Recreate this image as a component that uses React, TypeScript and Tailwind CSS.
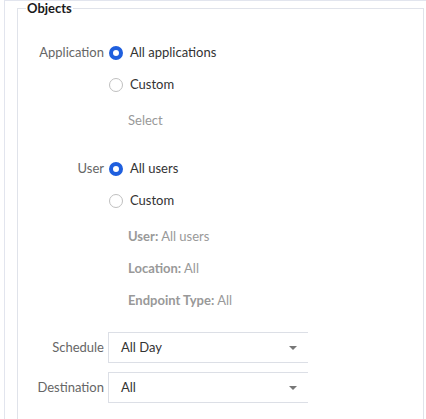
import React from "react";

const font = { fontFamily: "Lato, 'Noto Sans', sans-serif" };

function Radio({ checked }: { checked: boolean }) {
  return checked ? (
    <span className="box-border inline-block h-[14px] w-[14px] shrink-0 rounded-full border-[4px] border-[#1f5fde] bg-white" />
  ) : (
    <span className="box-border inline-block h-[14px] w-[14px] shrink-0 rounded-full border border-[#bfbfbf] bg-white" />
  );
}

function Label({ children }: { children?: React.ReactNode }) {
  return <div className="w-[86px] shrink-0 text-right text-[13px] text-[#666]">{children}</div>;
}

function RadioRow({ label, text, checked }: { label?: string; text: string; checked: boolean }) {
  return (
    <div className="flex h-[32px] items-center">
      <Label>{label}</Label>
      <div className="ml-[5px] flex items-center">
        <Radio checked={checked} />
        <span className="ml-[7px] text-[13px] text-[#333]">{text}</span>
      </div>
    </div>
  );
}

function HintRow({ children, className = "" }: { children: React.ReactNode; className?: string }) {
  return (
    <div className={`flex h-[32px] items-center ${className}`}>
      <div className="w-[110px] shrink-0" />
      <div className="text-[13px] text-[#999]">{children}</div>
    </div>
  );
}

function SelectRow({ label, value, className = "" }: { label: string; value: string; className?: string }) {
  return (
    <div className={`flex h-[31px] items-center ${className}`}>
      <Label>{label}</Label>
      <div className="ml-[4px] flex h-[31px] w-[200px] items-center border-y border-l border-[#dcdfe6] pl-[12px] pr-[11px]">
        <span className="flex-1 pt-[1px] text-[13px] text-[#333]">{value}</span>
        <span className="h-0 w-0 border-x-[4px] border-t-[4px] border-x-transparent border-t-[#777]" />
      </div>
    </div>
  );
}

export default function App() {
  return (
    <div className="h-[419px] w-[426px] overflow-hidden bg-white" style={font}>
      <div className="ml-[4px] h-[430px] border-l border-t border-[#e2e5ee] pl-[12px]">
        <fieldset className="h-[440px] w-[407px] border border-[#e0e3ea] pb-4">
          <legend className="ml-[8px] px-[1px] text-[13px] font-bold leading-[14px] text-[#1a1a1a]">Objects</legend>
          <div className="pt-[22px]">
            <RadioRow label="Application" text="All applications" checked />
            <RadioRow text="Custom" checked={false} />
            <HintRow className="mt-[4px]">Select</HintRow>
            <div className="mt-[16px]">
              <RadioRow label="User" text="All users" checked />
              <RadioRow text="Custom" checked={false} />
            </div>
            <HintRow className="mt-[4px]">
              <span className="font-bold">User:</span> All users
            </HintRow>
            <HintRow>
              <span className="font-bold">Location:</span> All
            </HintRow>
            <HintRow>
              <span className="font-bold">Endpoint Type:</span> All
            </HintRow>
            <SelectRow className="mt-[15px]" label="Schedule" value="All Day" />
            <SelectRow className="mt-[9px]" label="Destination" value="All" />
          </div>
        </fieldset>
      </div>
    </div>
  );
}
